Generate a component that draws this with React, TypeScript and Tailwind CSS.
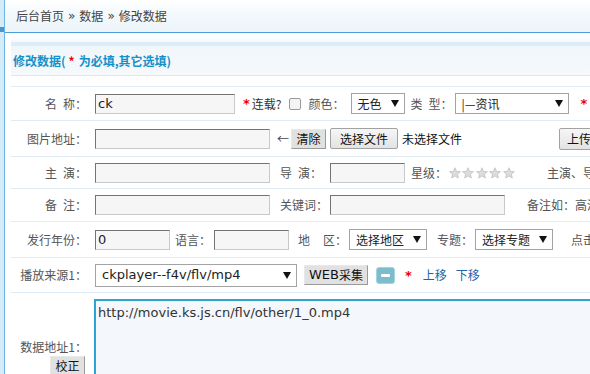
import React from "react";

// --- small building blocks ---
const Input = ({ w, value }: { w: string; value?: string }) => (
  <div
    className={`${w} h-[20px] shrink-0 border border-t-[#747474] border-l-[#747474] border-b-[#c9c9c9] border-r-[#c9c9c9] bg-[#f6f6f6] pl-[2px] flex items-center text-[13px] text-[#222] font-['DejaVu_Sans',sans-serif]`}
  >
    {value}
  </div>
);

const Caret = () => (
  <svg width="8" height="7" viewBox="0 0 8 7" className="shrink-0">
    <polygon points="0,0 8,0 4,7" fill="#111" />
  </svg>
);

const Select = ({ w, h = "h-[21px]", text, latin }: { w: string; h?: string; text: string; latin?: boolean }) => (
  <div
    className={`${w} ${h} shrink-0 border border-[#a3a3a3] bg-white flex items-center justify-between pl-[6px] pr-[5px] text-[#222] ${
      latin ? "text-[13px] font-['DejaVu_Sans',sans-serif]" : "text-[12px]"
    }`}
  >
    <span className="whitespace-nowrap">{text}</span>
    <Caret />
  </div>
);

const Btn = ({ w, h = "h-[20px]", children, round }: { w: string; h?: string; children: React.ReactNode; round?: boolean }) => (
  <div
    className={`${w} ${h} shrink-0 flex items-center justify-center text-[12px] text-[#111] border ${
      round
        ? "rounded-[2px] border-[#a2a2a2] bg-gradient-to-b from-[#f6f6f6] to-[#e3e3e3]"
        : "border-t-[#e8e8e8] border-l-[#e8e8e8] border-b-[#9a9a9a] border-r-[#9a9a9a] bg-[#e1e1e1]"
    }`}
  >
    {children}
  </div>
);

const Req = ({ className = "" }: { className?: string }) => (
  <span className={`text-[#ee0000] font-bold text-[13px] leading-none font-['DejaVu_Sans',sans-serif] ${className}`}>*</span>
);

const Label = ({ children }: { children: React.ReactNode }) => (
  <div className="w-[76px] shrink-0 text-right text-[12px] text-[#555] whitespace-nowrap">{children}</div>
);

const Row = ({ h, children }: { h: string; children: React.ReactNode }) => (
  <div className={`${h} flex items-center border-b border-[#dfecf6] whitespace-nowrap`}>{children}</div>
);

const Sep = () => <span className="mx-[4px] font-['DejaVu_Sans',sans-serif]">»</span>;

const Star = () => (
  <svg width="12" height="12" viewBox="0 0 24 24" className="shrink-0 mr-[1.4px]">
    <polygon
      points="12,1.5 15,8.8 22.8,9.3 16.8,14.3 18.7,22 12,17.8 5.3,22 7.2,14.3 1.2,9.3 9,8.8"
      fill="#dcdcdc"
      stroke="#bdbdbd"
      strokeWidth="1.5"
    />
  </svg>
);

export default function App() {
  return (
    <div className="w-[590px] h-[374px] overflow-hidden flex bg-white text-[#333] font-['Noto_Sans_CJK_SC',sans-serif]">
      {/* left strip */}
      <div className="w-[5px] shrink-0 bg-[#d4ecf9] border-r border-[#6db4e1] flex flex-col">
        <div className="h-[27px]" />
        <div className="h-[5px] bg-[#4b95c8]" />
      </div>

      <div className="flex-1 min-w-0 flex flex-col">
        {/* breadcrumb */}
        <div className="h-[33px] shrink-0 border-b border-[#4a9ed8] bg-gradient-to-b from-white via-[#f2f8fc] to-[#edf5fa] flex items-center pl-[11px] text-[12px] text-[#444] whitespace-nowrap">
          后台首页<Sep />数据<Sep />修改数据
        </div>

        <div className="pl-[6px] flex flex-col">
          <div className="h-[9px] bg-gradient-to-b from-white to-[#f5f9fc]" />
          <div className="h-[4px] bg-[#ddedf8]" />
          <div className="h-[30px] border-b border-[#dfe8f0] bg-gradient-to-b from-[#f1f6fa] to-[#f5f9fc] flex items-center pl-[2px] text-[12px] font-bold text-[#1590c8]">
            修改数据(<span className="text-[#ee0000] ml-[3px] mr-[4px]">*</span>为必填,其它选填)
          </div>
          <div className="h-[10px]" />

          <div className="border-t border-[#dfecf6]">
            <Row h="h-[34px]">
              <Label>名&ensp;称：</Label>
              <div className="ml-[8px] flex items-center">
                <Input w="w-[140px]" value="ck" />
                <Req className="ml-[8px]" />
                <span className="ml-[2px] text-[12px]">连载?</span>
                <div className="ml-[7px] w-[12px] h-[12px] rounded-[2px] border border-[#9a9a9a] bg-[#f4f4f4]" />
                <span className="ml-[8px] text-[12px] text-[#555]">颜色：</span>
                <div className="ml-[6px]">
                  <Select w="w-[54px]" text="无色" />
                </div>
                <span className="ml-[6px] text-[12px] text-[#555]">类&ensp;型：</span>
                <div className="ml-[2px]">
                  <Select w="w-[114px]" text="|—资讯" />
                </div>
                <Req className="ml-[12px]" />
              </div>
            </Row>

            <Row h="h-[36px]">
              <Label>图片地址：</Label>
              <div className="ml-[8px] flex items-center">
                <Input w="w-[175px]" />
                <span className="ml-[7px] text-[12px] text-[#444]">←</span>
                <div className="ml-[2px]">
                  <Btn w="w-[35px]">清除</Btn>
                </div>
                <div className="ml-[4px]">
                  <Btn w="w-[68px]" h="h-[21px]" round>选择文件</Btn>
                </div>
                <span className="ml-[4px] text-[12px] text-[#111]">未选择文件</span>
                <div className="ml-[97px]">
                  <Btn w="w-[40px]" h="h-[22px]" round>上传</Btn>
                </div>
              </div>
            </Row>

            <Row h="h-[32px]">
              <Label>主&ensp;演：</Label>
              <div className="ml-[8px] flex items-center">
                <Input w="w-[175px]" />
                <span className="ml-[10px] text-[12px] text-[#555]">导&ensp;演：</span>
                <div className="ml-[8px]">
                  <Input w="w-[75px]" />
                </div>
                <span className="ml-[6px] text-[12px] text-[#555]">星级：</span>
                <div className="ml-[2px] flex items-center">
                  <Star />
                  <Star />
                  <Star />
                  <Star />
                  <Star />
                </div>
                <span className="ml-[31px] text-[12px] text-[#555]">主演、导演用逗号分隔</span>
              </div>
            </Row>

            <Row h="h-[33px]">
              <Label>备&ensp;注：</Label>
              <div className="ml-[8px] flex items-center">
                <Input w="w-[175px]" />
                <span className="ml-[10px] text-[12px] text-[#555]">关键词：</span>
                <div className="ml-[2px]">
                  <Input w="w-[175px]" />
                </div>
                <span className="ml-[22px] text-[12px] text-[#555]">备注如：高清</span>
              </div>
            </Row>

            <Row h="h-[36px]">
              <Label>发行年份：</Label>
              <div className="ml-[8px] flex items-center">
                <Input w="w-[75px]" value="0" />
                <span className="ml-[5px] text-[12px] text-[#555]">语言：</span>
                <div className="ml-[3px]">
                  <Input w="w-[75px]" />
                </div>
                <span className="ml-[9px] text-[12px] text-[#555]">
                  地<span className="inline-block w-[13px]" />区：
                </span>
                <div className="ml-[2px]">
                  <Select w="w-[78px]" text="选择地区" />
                </div>
                <span className="ml-[10px] text-[12px] text-[#555]">专题：</span>
                <div className="ml-[2px]">
                  <Select w="w-[78px]" text="选择专题" />
                </div>
                <span className="ml-[18px] text-[12px] text-[#555]">点击</span>
              </div>
            </Row>

            <Row h="h-[35px]">
              <Label>播放来源1：</Label>
              <div className="ml-[8px] flex items-center">
                <Select w="w-[202px]" h="h-[23px]" text="ckplayer--f4v/flv/mp4" latin />
                <div className="ml-[7px]">
                  <Btn w="w-[64px]">
                    <span className="text-[13px] font-['DejaVu_Sans',sans-serif]">WEB</span>采集
                  </Btn>
                </div>
                <div className="ml-[8px] w-[19px] h-[17px] rounded-[3px] bg-[#7bbdcc] border border-[#a9d3dc] flex items-center justify-center">
                  <div className="w-[9px] h-[3px] bg-white rounded-[1px]" />
                </div>
                <Req className="ml-[10px]" />
                <span className="ml-[11px] text-[12px] text-[#1e64a8]">上移</span>
                <span className="ml-[9px] text-[12px] text-[#1e64a8]">下移</span>
              </div>
            </Row>

            <div className="flex">
              <div className="w-[76px] shrink-0 flex flex-col items-end pt-[45px]">
                <span className="text-[12px] text-[#555] whitespace-nowrap">数据地址1：</span>
                <div className="mr-[2px]">
                  <Btn w="w-[35px]" h="h-[20px]">校正</Btn>
                </div>
              </div>
              <div className="ml-[7px] pt-[6px]">
                <div className="w-[520px] h-[110px] border-2 border-[#2ea4d2] bg-[#f4f7fc] px-[2px] pt-[2px] text-[13px] text-[#333] font-['DejaVu_Sans',sans-serif]">
                  http://movie.ks.js.cn/flv/other/1_0.mp4
                </div>
              </div>
            </div>
          </div>
        </div>
      </div>
    </div>
  );
}
